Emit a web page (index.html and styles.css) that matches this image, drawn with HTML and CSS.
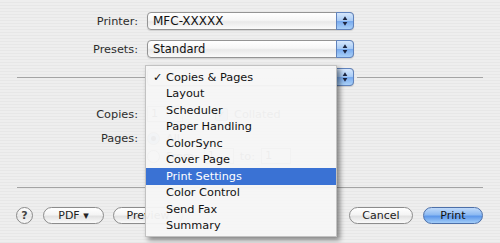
FILE: index.html
```html
<!DOCTYPE html>
<html lang="en">
<head>
    <meta charset="UTF-8">
    <title>Print</title>
    <link rel="stylesheet" href="styles.css">
</head>
<body>
    <div class="dialog">
        <!-- printer / presets -->
        <div class="field-row">
            <span class="label">Printer:</span>
            <div class="popup">
                <span class="popup-text big">MFC-XXXXX</span>
                <span class="stepper">
                    <svg width="17" height="18" viewBox="0 0 17 18"><path d="M8.5 4 L11 8 L6 8 Z M6 10 L11 10 L8.5 14 Z" fill="#1d2640"/></svg>
                </span>
            </div>
        </div>
        <div class="field-row">
            <span class="label">Presets:</span>
            <div class="popup">
                <span class="popup-text">Standard</span>
                <span class="stepper">
                    <svg width="17" height="18" viewBox="0 0 17 18"><path d="M8.5 4 L11 8 L6 8 Z M6 10 L11 10 L8.5 14 Z" fill="#1d2640"/></svg>
                </span>
            </div>
        </div>

        <!-- panel chooser (its label is hidden by the open menu) -->
        <div class="sep-row">
            <span class="line line-left"></span>
            <div class="popup panel-popup">
                <span class="popup-text"></span>
                <span class="stepper">
                    <svg width="17" height="18" viewBox="0 0 17 18"><path d="M8.5 4 L11 8 L6 8 Z M6 10 L11 10 L8.5 14 Z" fill="#1d2640"/></svg>
                </span>
            </div>
            <span class="line"></span>
        </div>

        <!-- copies & pages panel (under the menu) -->
        <div class="panel">
            <div class="panel-row">
                <span class="label">Copies:</span>
                <div class="controls">
                    <span class="textbox small">1</span>
                    <span class="checkbox">&#10003;</span>
                    <span>Collated</span>
                </div>
            </div>
            <div class="panel-row">
                <span class="label">Pages:</span>
                <div class="controls">
                    <span class="radio on"></span>
                    <span>All</span>
                </div>
            </div>
            <div class="panel-row">
                <span></span>
                <div class="controls">
                    <span class="radio"></span>
                    <span>From:</span>
                    <span class="textbox">1</span>
                    <span>to:</span>
                    <span class="textbox">1</span>
                </div>
            </div>
        </div>

        <div class="hr"></div>

        <!-- buttons -->
        <div class="buttons">
            <span class="help">?</span>
            <span class="btn pdf">PDF &#9662;</span>
            <span class="btn preview">Preview</span>
            <span class="spacer"></span>
            <span class="btn cancel">Cancel</span>
            <span class="btn default">Print</span>
        </div>
    </div>

    <!-- open popup menu -->
    <ul class="menu">
        <li><span class="check">&#10003;</span>Copies &amp; Pages</li>
        <li><span class="check"></span>Layout</li>
        <li><span class="check"></span>Scheduler</li>
        <li><span class="check"></span>Paper Handling</li>
        <li><span class="check"></span>ColorSync</li>
        <li><span class="check"></span>Cover Page</li>
        <li class="selected"><span class="check"></span>Print Settings</li>
        <li><span class="check"></span>Color Control</li>
        <li><span class="check"></span>Send Fax</li>
        <li><span class="check"></span>Summary</li>
    </ul>
</body>
</html>
```

FILE: styles.css
```css
* {
    margin: 0;
    padding: 0;
    box-sizing: border-box;
}

body {
    width: 500px;
    height: 243px;
    overflow: hidden;
    position: relative;
    font-family: 'DejaVu Sans', sans-serif;
    font-size: 11.3px;
    color: #222;
    background: repeating-linear-gradient(to bottom, #eeeeee 0, #eeeeee 2px, #e7e7e7 2px, #e7e7e7 3px);
}

.dialog {
    padding-top: 12px;
}

/* label + popup rows */
.field-row {
    display: grid;
    grid-template-columns: 138px 207px;
    column-gap: 9px;
    align-items: center;
    height: 18px;
    margin-bottom: 10px;
}

.label {
    text-align: right;
    color: #2c2c2c;
}

.popup {
    display: flex;
    align-items: center;
    height: 18px;
    border: 1px solid #949494;
    border-radius: 4px;
    background: linear-gradient(to bottom, #ffffff 0%, #f6f6f6 45%, #e9e9e9 55%, #fbfbfb 100%);
    box-shadow: 0 1px 1px rgba(0,0,0,0.12);
}

.popup-text {
    flex: 1;
    padding-left: 5px;
    color: #111;
    font-size: 11.5px;
}

.popup-text.big {
    font-size: 12px;
}

.stepper {
    width: 18px;
    height: 18px;
    margin: 0 -1px 0 0;
    border: 1px solid #6083bd;
    border-radius: 0 4px 4px 0;
    background: linear-gradient(to bottom, #d6e7fc 0%, #a8cbf5 48%, #78aaee 52%, #a9d0f8 100%);
    display: flex;
    align-items: center;
    justify-content: center;
}

.stepper svg {
    display: block;
}

/* separator with panel chooser */
.sep-row {
    display: flex;
    align-items: center;
    height: 18px;
    margin-top: 1px;
    padding: 0 17px;
}

.line {
    flex: 1;
    height: 1px;
    background: #a4a4a4;
}

.line-left {
    flex: 0 0 128px;
}

.panel-popup {
    width: 207px;
    margin: 0 3px 0 2px;
}

/* copies & pages */
.panel {
    padding-top: 18px;
    height: 101px;
}

.panel-row {
    display: grid;
    grid-template-columns: 138px 1fr;
    column-gap: 9px;
    align-items: center;
    height: 17.5px;
}

.panel-row:first-child {
    height: 20px;
    margin-bottom: 6px;
}

.controls {
    display: flex;
    align-items: center;
    gap: 6px;
    color: #333;
}

.textbox {
    width: 30px;
    height: 16px;
    border: 1px solid #9a9a9a;
    background: #fff;
    padding-left: 3px;
    line-height: 14px;
}

.textbox.small {
    width: 36px;
    margin-right: 26px;
}

.checkbox {
    width: 13px;
    height: 13px;
    border: 1px solid #8a8a8a;
    border-radius: 2px;
    background: #9cc3f2;
    font-size: 10px;
    line-height: 11px;
    text-align: center;
}

.radio {
    width: 13px;
    height: 13px;
    border: 1px solid #8a8a8a;
    border-radius: 50%;
    background: #fff;
}

.radio.on {
    background: radial-gradient(circle, #223 0 2px, #9cc3f2 3px);
}

.hr {
    height: 1px;
    margin: 0 17px;
    background: #a4a4a4;
}

/* bottom buttons */
.buttons {
    display: flex;
    align-items: center;
    margin-top: 19px;
    padding: 0 17px 0 16px;
}

.help {
    width: 17px;
    height: 17px;
    border: 1px solid #8a8a8a;
    border-radius: 50%;
    background: linear-gradient(to bottom, #ffffff, #e6e6e6 55%, #f9f9f9);
    font-size: 11px;
    font-weight: bold;
    color: #444;
    text-align: center;
    line-height: 15px;
}

.btn {
    height: 17px;
    border: 1px solid #8c8c8c;
    border-radius: 9px;
    background: linear-gradient(to bottom, #ffffff 0%, #f4f4f4 45%, #e2e2e2 55%, #fafafa 100%);
    font-size: 11px;
    color: #222;
    text-align: center;
    line-height: 15px;
}

.pdf {
    width: 61px;
    margin-left: 10px;
}

.preview {
    width: 70px;
    margin-left: 9px;
}

.spacer {
    flex: 1;
}

.cancel {
    width: 64px;
}

.default {
    width: 60px;
    margin-left: 10px;
    border-color: #4d70a9;
    background: linear-gradient(to bottom, #c0dafa 0%, #8dbaf2 45%, #5c97ea 55%, #a3cdf8 100%);
    color: #111;
}

/* the open popup menu, slightly see-through like Aqua menus */
.menu {
    position: absolute;
    left: 145px;
    top: 65px;
    width: 192px;
    height: 172px;
    padding: 3px 0;
    list-style: none;
    background: rgba(246,246,246,0.955);
    border: 1px solid rgba(160,160,160,0.6);
    box-shadow: 3px 3px 5px rgba(0,0,0,0.45);
}

.menu li {
    display: flex;
    align-items: center;
    height: 16.5px;
    padding-left: 7px;
    color: #111;
    white-space: nowrap;
}

.menu .check {
    width: 13px;
    flex: 0 0 13px;
}

.menu li.selected {
    background: #3a72d4;
    color: #fff;
}
```
